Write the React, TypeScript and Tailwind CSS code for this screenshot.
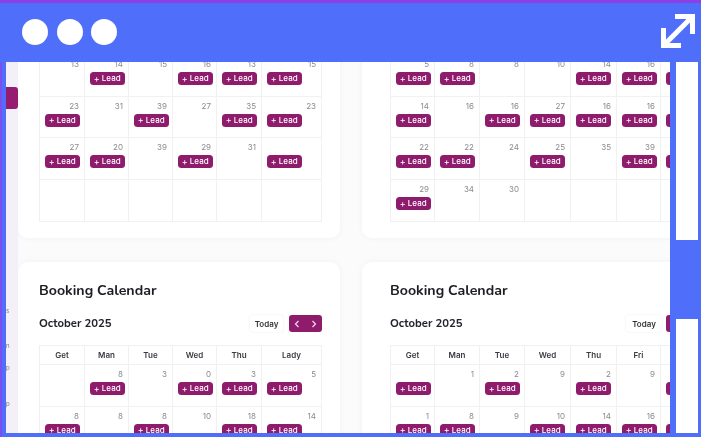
const ACCENT = "bg-[#8f1b6c]";

type Cell = [string, boolean];
const c = (d: string | number, lead = false): Cell => [String(d), lead];

function Grid({ cols, heads, rows }: { cols: string; heads?: string[]; rows: Cell[][] }) {
  return (
    <div className={`grid w-max border-l border-[#f0f0f3] ${heads ? "border-t" : ""} ${cols}`}>
      {heads?.map((h, i) => (
        <div key={i} className="flex h-[19px] items-center justify-center border-r border-b border-[#f0f0f3] text-[8px] font-semibold text-[#3a3a42]">
          {h}
        </div>
      ))}
      {rows.flat().map(([d, lead], i) => (
        <div key={i} className="h-[41.7px] border-r border-b border-[#f1f1f4] px-[5px] pt-[4px]">
          <div className="h-[10px] text-right text-[8px] leading-[10px] text-[#8a8a8f]">{d}</div>
          {lead && (
            <div className={`mt-[3px] flex h-[13px] w-[34.5px] items-center justify-center gap-[2px] rounded-[3.5px] text-[8px] leading-[13px] font-medium text-white ${ACCENT}`}>
              <span className="text-[9px] leading-[12px] font-normal">+</span>
              <span>Lead</span>
            </div>
          )}
        </div>
      ))}
    </div>
  );
}

function Header({ rowWidth, todayClass, gap }: { rowWidth: string; todayClass: string; gap: string }) {
  return (
    <>
      <h2 className="h-[53px] pt-[20px] text-[14.2px] leading-[18px] font-bold text-[#1c1c22] font-['Nunito','Open_Sans',sans-serif]">
        Booking Calendar
      </h2>
      <div className="flex h-[30px] w-max items-start">
        <div className={`text-[11.3px] leading-[17px] font-bold text-[#22222a] font-['Nunito','Open_Sans',sans-serif] ${rowWidth}`}>
          October 2025
        </div>
        <div className={`flex h-[17px] items-center justify-center rounded-[3px] bg-white text-[8px] font-semibold text-[#333] shadow-[0_0_2px_rgba(0,0,0,0.1)] ${todayClass}`}>
          Today
        </div>
        <div className={`flex h-[17px] w-[33px] items-center justify-around rounded-[3px] ${gap} ${ACCENT}`}>
          <svg width="6" height="8" viewBox="0 0 6 8" fill="none" stroke="#f4d9ea" strokeWidth="1.2"><path d="M4.5 1 1.5 4l3 3" /></svg>
          <svg width="6" height="8" viewBox="0 0 6 8" fill="none" stroke="#f4d9ea" strokeWidth="1.2"><path d="M1.5 1l3 3-3 3" /></svg>
        </div>
      </div>
    </>
  );
}

const LEFT_COLS = "grid-cols-[45px_44px_44px_44px_45px_60px]";
const RIGHT_COLS = "grid-cols-[44px_45px_45px_46px_46px_44px_44px]";
const HEADS_L = ["Get", "Man", "Tue", "Wed", "Thu", "Lady"];
const HEADS_R = ["Get", "Man", "Tue", "Wed", "Thu", "Fri", "Sat"];

const topLeft: Cell[][] = [
  [c(13), c(14, true), c(15), c(16, true), c(13, true), c(15, true)],
  [c(23, true), c(31), c(39, true), c(27), c(35, true), c(23, true)],
  [c(27, true), c(20, true), c(39), c(29, true), c(31), c("", true)],
  [c(""), c(""), c(""), c(""), c(""), c("")],
];
const topRight: Cell[][] = [
  [c(5, true), c(8, true), c(8), c(10), c(14, true), c(16, true), c("", true)],
  [c(14, true), c(16), c(16, true), c(27, true), c(16, true), c(16, true), c("", true)],
  [c(22, true), c(22, true), c(24), c(25, true), c(35), c(39, true), c("", true)],
  [c(29, true), c(34), c(30), c(""), c(""), c(""), c("")],
];
const botLeft: Cell[][] = [
  [c(""), c(8, true), c(3), c(0, true), c(3, true), c(5, true)],
  [c(8, true), c(8), c(8, true), c(10), c(18, true), c(14, true)],
];
const botRight: Cell[][] = [
  [c("", true), c(1), c(2, true), c(9), c(2, true), c(9), c("", true)],
  [c(1, true), c(8, true), c(9), c(10, true), c(14, true), c(16, true), c("", true)],
];

const CARD = "w-full overflow-hidden bg-white shadow-[0_0_6px_rgba(60,50,90,0.05)]";

export default function App() {
  return (
    <div className="flex h-[437px] w-[701px] flex-col overflow-hidden bg-[#4f6ffb] font-['Inter',sans-serif]">
      <header className="flex h-[62px] shrink-0 items-center justify-between border-t-[3px] border-[#8d3fe6] pt-[1px] pr-[6px] pl-[22px]">
        <div className="mb-[2px] flex gap-[8.5px]">
          <span className="h-[26px] w-[26px] rounded-full bg-white" />
          <span className="h-[26px] w-[26px] rounded-full bg-white" />
          <span className="h-[26px] w-[26px] rounded-full bg-white" />
        </div>
        <svg width="34" height="34" viewBox="0 0 34 34" fill="none" stroke="white" strokeWidth="5" className="mb-[4px]">
          <path d="M14 2.5H31.5V20" />
          <path d="M2.5 14V31.5H20" />
          <path d="M5 29 29 5" />
        </svg>
      </header>

      <div className="flex min-h-0 flex-1 border-l-[2px] border-[#7d4df0] pb-[4px]">
        <div className="w-[4px] shrink-0 bg-[#4f6ffb]" />
        <aside className="relative w-[12px] shrink-0 bg-[#f3f1f7] text-[6px] text-[#77778a] blur-[0.35px]">
          <div className="absolute top-[25px] left-0 h-[22px] w-[12px] rounded-r-[3px] bg-[#961c72]" />
          <span className="absolute top-[244px] left-[0px]">s</span>
          <span className="absolute top-[279px] left-[0px]">n</span>
          <span className="absolute top-[301px] left-[0px]">p</span>
          <span className="absolute top-[337px] left-[0px]">p</span>
        </aside>

        <main className="min-w-0 flex-1 overflow-hidden bg-[#fbfbfb] blur-[0.45px]">
          <div className="-mt-[7px] grid w-[680px] grid-cols-[322px_336px] gap-x-[22px] gap-y-[24px]">
            <div className={`${CARD} h-[183px] rounded-b-[10px] px-[21px]`}>
              <Grid cols={LEFT_COLS} rows={topLeft} />
            </div>
            <div className={`${CARD} h-[183px] rounded-b-[10px] px-[28px]`}>
              <Grid cols={RIGHT_COLS} rows={topRight} />
            </div>
            <div className={`${CARD} h-[200px] rounded-t-[10px] px-[21px]`}>
              <Header rowWidth="w-[211px]" todayClass="w-[33px]" gap="ml-[6px]" />
              <Grid cols={LEFT_COLS} heads={HEADS_L} rows={botLeft} />
            </div>
            <div className={`${CARD} h-[200px] rounded-t-[10px] px-[28px]`}>
              <Header rowWidth="w-[236px]" todayClass="w-[36px]" gap="ml-[4px]" />
              <Grid cols={RIGHT_COLS} heads={HEADS_R} rows={botRight} />
            </div>
          </div>
        </main>

        <div className="mr-[3px] ml-[6px] flex w-[22px] shrink-0 flex-col">
          <div className="h-[178px] bg-white" />
          <div className="mt-[79px] flex-1 bg-white" />
        </div>
      </div>
    </div>
  );
}
